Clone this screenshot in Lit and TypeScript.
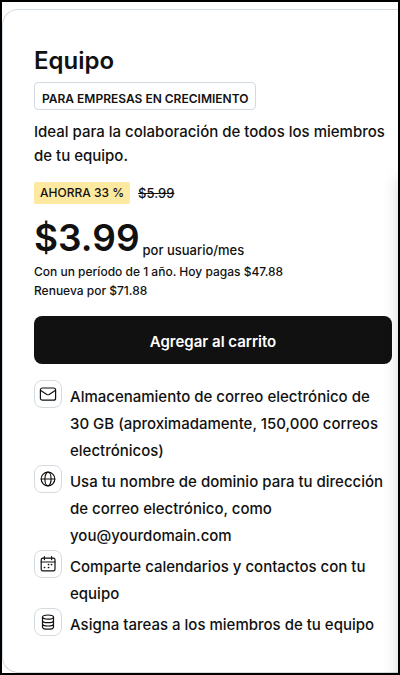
import { LitElement, html, css, svg } from "lit";
import { customElement } from "lit/decorators.js";

const mail = svg`<rect x="1.4" y="3" width="15.2" height="12.2" rx="2"/><path d="M1.8 5.6 7.8 9.4Q9 10.1 10.2 9.4L16.2 5.6"/>`;
const globe = svg`<circle cx="9" cy="9" r="6.8"/><ellipse cx="9" cy="9" rx="3.1" ry="6.8"/><path d="M2.2 9h13.6"/>`;
const calendar = svg`<rect x="2.2" y="3.2" width="13.8" height="12.6" rx="1.6"/><path d="M2.2 7h13.8M5.4 1.6v3M12.6 1.6v3"/><path stroke-width="1.7" d="M9.5 9.5h.1M12.5 9.5h.1M5.5 12.5h.1M9.5 12.5h.1"/>`;
const database = svg`<ellipse cx="9" cy="4.1" rx="5.5" ry="2.1"/><path d="M3.5 4.1v9.8c0 1.3 2.5 2.3 5.5 2.3s5.5-1 5.5-2.3V4.1M3.5 7.4c0 1.3 2.5 2.3 5.5 2.3s5.5-1 5.5-2.3M3.5 10.7c0 1.3 2.5 2.3 5.5 2.3s5.5-1 5.5-2.3"/>`;

const features = [
  { icon: mail, text: "Almacenamiento de correo electrónico de 30\u00a0GB (aproximadamente, 150,000 correos electrónicos)" },
  { icon: globe, text: "Usa tu nombre de dominio para tu dirección de correo electrónico, como you@yourdomain.com" },
  { icon: calendar, text: "Comparte calendarios y contactos con tu equipo" },
  { icon: database, text: "Asigna tareas a los miembros de tu equipo" },
];

@customElement("app-root")
export class AppRoot extends LitElement {
  static styles = css`
    :host {
      display: block;
      font-family: Inter, "Liberation Sans", sans-serif;
      font-size: 15px;
      font-weight: 500;
      color: #111;
    }
    * { box-sizing: border-box; }
    h2, p, ul { margin: 0; padding: 0; }
    .frame {
      position: relative;
      min-height: 100vh;
      display: flex;
      flex-direction: column;
      padding-top: 7px;
      border: 2px solid #000;
      background: #fff;
      overflow: hidden;
    }
    .frame::after {
      content: "";
      position: absolute;
      top: 176px;
      bottom: -20px;
      left: 100%;
      width: 40px;
      box-shadow: 0 0 16px rgba(0, 0, 0, 0.16);
    }
    .card {
      flex: 1;
      padding: 35px 6px 32px 31px;
      border: 1px solid #d4dbe0;
      border-right: 0;
      border-radius: 16px 0 0 16px;
    }
    .title { font-size: 24px; line-height: 32px; font-weight: 600; }
    .tag {
      display: inline-block;
      margin-top: 5px;
      height: 28px;
      padding: 6px 7px 0;
      border: 1px solid #d4dbe0;
      border-radius: 4px;
      font-size: 12px;
      font-weight: 600;
      line-height: 20px;
      vertical-align: top;
    }
    .intro { margin-top: 10px; line-height: 24px; }
    .deal { display: flex; align-items: center; gap: 8px; margin-top: 14px; font-size: 12px; line-height: 22px; }
    .save { padding: 0 6px; border-radius: 2px; background: #fee9a0; }
    .old { font-size: 13px; }
    .price { display: flex; align-items: flex-end; gap: 3px; margin-top: 12px; }
    .amount { font-size: 37px; line-height: 44px; font-weight: 600; }
    .per { font-size: 13px; line-height: 20px; }
    .terms { font-size: 12px; line-height: 19px; }
    .price + .terms { margin-top: 2px; }
    .buy {
      display: block;
      width: 100%;
      height: 48px;
      margin: 16px 0;
      padding: 2px 0 0;
      border: 0;
      border-radius: 8px;
      background: #111;
      color: #fff;
      font: inherit;
      font-weight: 600;
    }
    .features { list-style: none; display: grid; gap: 1px; padding-right: 6px; }
    .feature { display: flex; gap: 8px; line-height: 27px; }
    .badge {
      flex: none;
      display: grid;
      place-items: center;
      width: 28px;
      height: 28px;
      border: 1px solid #d4dbe0;
      border-radius: 8px;
    }
    .text { padding-top: 3px; }
    svg { display: block; fill: none; stroke: #111; stroke-width: 1.2; stroke-linecap: round; stroke-linejoin: round; }
  `;

  render() {
    return html`
      <main class="frame">
        <article class="card">
          <h2 class="title">Equipo</h2>
          <span class="tag">PARA EMPRESAS EN CRECIMIENTO</span>
          <p class="intro">Ideal para la colaboración de todos los miembros de tu equipo.</p>
          <div class="deal"><span class="save">AHORRA 33 %</span><s class="old">$5.99</s></div>
          <div class="price"><span class="amount">$3.99</span><span class="per">por usuario/mes</span></div>
          <p class="terms">Con un período de 1 año. Hoy pagas $47.88</p>
          <p class="terms">Renueva por $71.88</p>
          <button class="buy" type="button">Agregar al carrito</button>
          <ul class="features">
            ${features.map((f) => html`
              <li class="feature">
                <span class="badge"><svg width="18" height="18" viewBox="0 0 18 18" aria-hidden="true">${f.icon}</svg></span>
                <span class="text">${f.text}</span>
              </li>`)}
          </ul>
        </article>
      </main>
    `;
  }
}
